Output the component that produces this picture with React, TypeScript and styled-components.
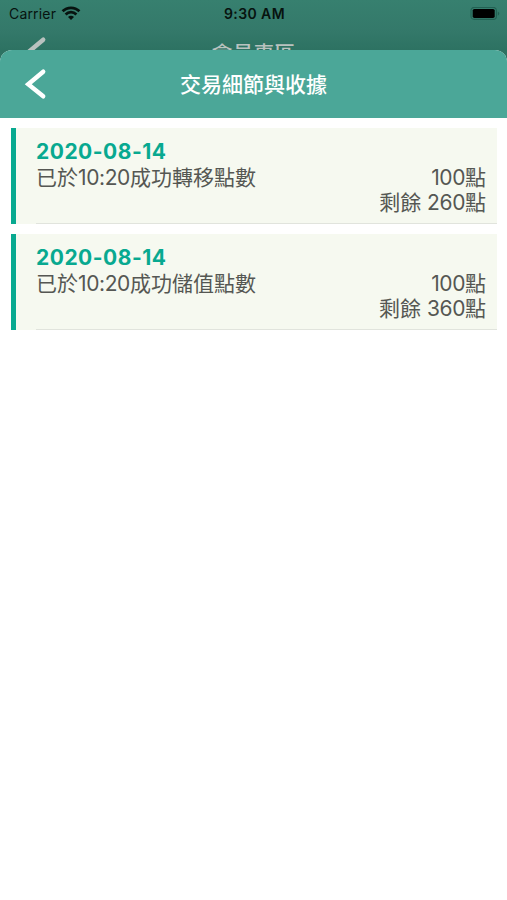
import React from "react";
import styled, { createGlobalStyle } from "styled-components";

const GlobalStyle = createGlobalStyle`
  *, *::before, *::after { box-sizing: border-box; }
  body {
    margin: 0;
    background: #fff;
    font-family: Inter, "Noto Sans CJK TC", sans-serif;
  }
`;

const Screen = styled.div`
  width: 507px;
  height: 900px;
  overflow: hidden;
  background: #fff;
`;

const Backdrop = styled.div`
  height: 76px;
  background: linear-gradient(#37806f 0px, #34796a 30px, #2d7262 50px, #2d7262 76px);
`;

const StatusBar = styled.div`
  display: grid;
  grid-template-columns: 1fr auto 1fr;
  align-items: center;
  height: 28px;
  padding: 0 7px 0 9px;
  font-size: 14px;
  line-height: 28px;
  color: #07130f;
`;

const Carrier = styled.div`
  display: flex;
  align-items: center;
  gap: 5px;
  letter-spacing: 0.18px;
`;

const Clock = styled.div`
  font-weight: 600;
  letter-spacing: 0.4px;
`;

const BatterySlot = styled.div`
  display: flex;
  justify-content: flex-end;
`;

const NavBar = styled.header<{ $dimmed?: boolean }>`
  display: grid;
  grid-template-columns: 72px 1fr 72px;
  align-items: center;
  height: ${(p) => (p.$dimmed ? "48px" : "68px")};
  color: ${(p) => (p.$dimmed ? "#b9c2bf" : "#fff")};
`;

const BackButton = styled.button`
  display: flex;
  padding: 0 0 0 24px;
  border: 0;
  background: none;
  color: inherit;
`;

const NavTitle = styled.h1<{ $dimmed?: boolean }>`
  margin: 0;
  padding-top: ${(p) => (p.$dimmed ? "4px" : "2px")};
  font-size: 21px;
  font-weight: 500;
  line-height: 30px;
  text-align: center;
`;

const Sheet = styled.main`
  position: relative;
  height: 850px;
  margin-top: -26px;
  overflow: hidden;
  border-radius: 12px 12px 0 0;
  background: #fff;
`;

const SheetHeader = styled.div`
  background: #4ba798;
`;

const RecordList = styled.ul`
  display: flex;
  flex-direction: column;
  gap: 10px;
  margin: 0;
  padding: 10px 10px 0 11px;
  list-style: none;
`;

const Record = styled.li`
  height: 96px;
  padding: 10px 0 0 20px;
  border-left: 5px solid #08a990;
  background: #f6f9f0;
`;

const RecordBody = styled.div`
  display: flex;
  flex-direction: column;
  height: 86px;
  padding-right: 11px;
  border-bottom: 1px solid #e1e4dd;
`;

const DateLabel = styled.time`
  height: 27px;
  font-size: 21px;
  font-weight: 700;
  line-height: 27px;
  letter-spacing: 0.5px;
  color: #08a990;
`;

const Line = styled.div<{ $end?: boolean }>`
  display: flex;
  justify-content: ${(p) => (p.$end ? "flex-end" : "space-between")};
  height: 25px;
  font-size: 21px;
  line-height: 25px;
  white-space: pre;
  color: #555753;
`;

const Digits = styled.span`
  letter-spacing: -0.4px;
`;

const MixedText = ({ text }: { text: string }) => (
  <span>
    {text.split(/([\d:]+)/).map((part, i) => (i % 2 ? <Digits key={i}>{part}</Digits> : part))}
  </span>
);

const BackIcon = () => (
  <svg width="24" height="32" viewBox="0 0 24 32" fill="none">
    <path d="M19.2 3.7 4.2 16.2 19.2 28.3" stroke="currentColor" strokeWidth="4.4" strokeLinecap="round" strokeLinejoin="miter" />
  </svg>
);

const WifiIcon = () => (
  <svg width="20" height="17" viewBox="0 0 20 17" fill="none" stroke="#07130f" strokeWidth="2.7">
    <path d="M1.6 5.3C6.2 0.6 13.8 0.6 18.4 5.3" />
    <path d="M4.6 8.5C7.6 5.4 12.4 5.4 15.4 8.5" />
    <path d="M10 14 7 11C8.6 9.4 11.4 9.4 13 11Z" fill="#07130f" stroke="none" />
  </svg>
);

const BatteryIcon = () => (
  <svg width="30" height="15" viewBox="0 0 30 15">
    <rect x="1" y="0.4" width="25.4" height="12" rx="3.2" fill="none" stroke="#226153" strokeWidth="1.1" />
    <rect x="2.7" y="1.9" width="22" height="9" rx="1.7" fill="#000" />
    <path d="M27.8 4.5C29.8 5.3 29.8 7.9 27.8 8.7Z" fill="#226153" />
  </svg>
);

const records = [
  { date: "2020-08-14", message: "已於10:20成功轉移點數", points: "100點", balance: "剩餘 260點" },
  { date: "2020-08-14", message: "已於10:20成功儲值點數", points: "100點", balance: "剩餘 360點" },
];

export default function App() {
  return (
    <Screen>
      <GlobalStyle />
      <Backdrop>
        <StatusBar>
          <Carrier>Carrier <WifiIcon /></Carrier>
          <Clock>9:30 AM</Clock>
          <BatterySlot><BatteryIcon /></BatterySlot>
        </StatusBar>
        <NavBar $dimmed>
          <BackButton aria-label="返回"><BackIcon /></BackButton>
          <NavTitle $dimmed>會員專區</NavTitle>
        </NavBar>
      </Backdrop>
      <Sheet>
        <SheetHeader>
          <NavBar>
            <BackButton aria-label="返回"><BackIcon /></BackButton>
            <NavTitle>交易細節與收據</NavTitle>
          </NavBar>
        </SheetHeader>
        <RecordList>
          {records.map((record) => (
            <Record key={record.message}>
              <RecordBody>
                <DateLabel>{record.date}</DateLabel>
                <Line><MixedText text={record.message} /><MixedText text={record.points} /></Line>
                <Line $end><MixedText text={record.balance} /></Line>
              </RecordBody>
            </Record>
          ))}
        </RecordList>
      </Sheet>
    </Screen>
  );
}
